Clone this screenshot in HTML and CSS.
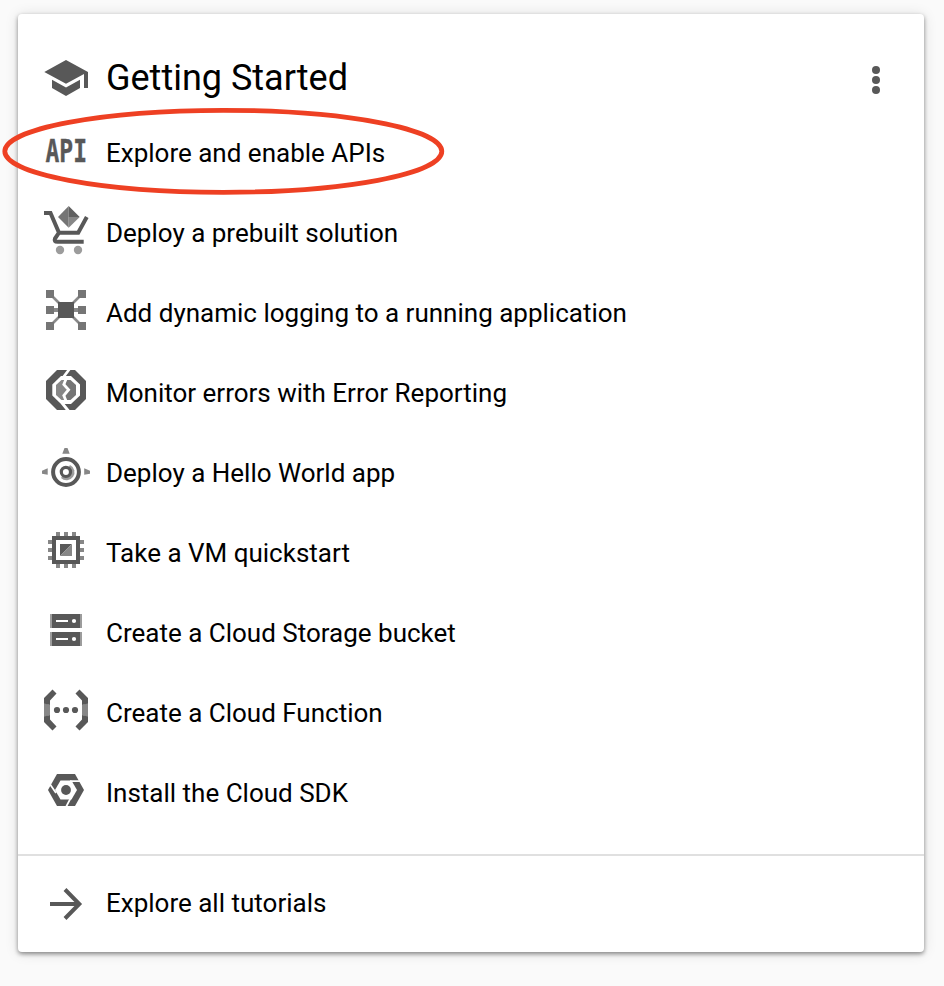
FILE: index.html
```html
<!DOCTYPE html>
<html lang="en">
<head>
<meta charset="utf-8">
<title>Getting Started</title>
<link rel="stylesheet" href="styles.css">
</head>
<body>
<main class="card">
  <header class="head">
    <svg class="icon" viewBox="42 54 48 48"><path d="M66 60 44.3 71.9 66 83.8 84 74V88H88V71.9ZM52 79.7V88L66 96 80 88V79.7L66 87.5Z"/></svg>
    <h1 class="title">Getting Started</h1>
    <svg class="more" viewBox="0 0 8 28"><circle cx="4" cy="4" r="4"/><circle cx="4" cy="14" r="4"/><circle cx="4" cy="24" r="4"/></svg>
  </header>
  <ul class="list">
    <li class="row">
      <svg class="icon" viewBox="42 126 48 48"><text class="api" x="45.5" y="161.7" textLength="41.5" lengthAdjust="spacingAndGlyphs">API</text></svg>
      <span class="label">Explore and enable APIs</span>
      <svg class="ring" viewBox="0 0 444 90"><ellipse cx="222.3" cy="45.3" rx="218.5" ry="41"/></svg>
    </li>
    <li class="row">
      <svg class="icon" viewBox="42 206 48 48"><path class="line" d="M44 213H50.5L59 232.7H78.2L86.8 217M59 232.7 55 238.5Q53.6 241.7 57.5 241.7H83.7"/><path class="mid" d="M68.7 206V217H58Z"/><path class="deep" d="M68.7 206V217H79.7Z"/><path class="mid" d="M68.7 227.7V217H58Z"/><path class="soft" d="M68.7 227.7V217H79.7Z"/><circle class="light" cx="60" cy="250" r="4.2"/><circle class="light" cx="78" cy="250" r="4.2"/></svg>
      <span class="label">Deploy a prebuilt solution</span>
    </li>
    <li class="row">
      <svg class="icon" viewBox="42 286 48 48"><path class="link" d="M50 294 82 326M82 294 50 326"/><path class="link wide" d="M50 310H82"/><path class="mid" d="M46 290h8v8h-8zM78 290h8v8h-8zM46 306h8v8h-8zM78 306h8v8h-8zM46 322h8v8h-8zM78 322h8v8h-8z"/><path d="M58 302h16v16h-16z"/></svg>
      <span class="label">Add dynamic logging to a running application</span>
    </li>
    <li class="row">
      <svg class="icon" viewBox="42 366 48 48"><path d="M57 370H75L86 381V399L75 410H57L46 399V381Z"/><path class="white" d="M61 376H71L80 384.5V395.5L71 404H61L52.3 395.5V384.5Z"/><path class="soft" d="M61.5 380H66V400H61.5L56 395V385Z"/><path class="mid" d="M66 380H70.5L76 385V395L70.5 400H66Z"/><path class="cut" d="M69.5 369 63.5 377M62 403 68.5 411M66.5 378 63.8 384.5 68.6 389.7 63.8 395.5 66.5 402"/></svg>
      <span class="label">Monitor errors with Error Reporting</span>
    </li>
    <li class="row">
      <svg class="icon" viewBox="42 446 48 48"><path class="soft" d="M64.5 448H67.5L69.7 453.7H62.3ZM42 470.8 47.7 468.3V474.7L42 473.7ZM90 470.8 84.2 468.3V474.7L90 473.7Z"/><circle class="line" cx="66" cy="472" r="12.9"/><path class="light" d="M70 465A8 8 0 1 1 61 478Z"/><circle class="core" cx="65.9" cy="471.9" r="4.6"/></svg>
      <span class="label">Deploy a Hello World app</span>
    </li>
    <li class="row">
      <svg class="icon" viewBox="42 526 48 48"><path class="soft" d="M56 532h4v4h-4zM64 532h4v4h-4zM72 532h4v4h-4zM56 564h4v4h-4zM64 564h4v4h-4zM72 564h4v4h-4zM48 540h4v4h-4zM48 548h4v4h-4zM48 556h4v4h-4zM80 540h4v4h-4zM80 548h4v4h-4zM80 556h4v4h-4z"/><path fill-rule="evenodd" d="M52 536H80V564H52ZM56 540V560H76V540Z"/><path d="M60 544H72L60 556Z"/><path class="soft" d="M72 544V556H60Z"/></svg>
      <span class="label">Take a VM quickstart</span>
    </li>
    <li class="row">
      <svg class="icon" viewBox="42 606 48 48"><path class="light" d="M50 614h32v14h-32zM50 632h32v14h-32z"/><path d="M52 614h28v14h-28zM52 632h28v14h-28z"/><path class="white" d="M56 620h12v2h-12zM56 638h12v2h-12z"/><circle class="white" cx="74" cy="621" r="2.1"/><circle class="white" cx="74" cy="639" r="2.1"/></svg>
      <span class="label">Create a Cloud Storage bucket</span>
    </li>
    <li class="row">
      <svg class="icon" viewBox="42 686 48 48"><path class="soft" d="M44 703 50 705V715L44 717ZM88 703 82 705V715L88 717Z"/><path d="M44 698 52.5 689.5 56.5 693.5 50 700.5V705L44 703.5ZM44 722 52.5 730.5 56.5 726.5 50 719.5V715L44 716.5ZM88 698 79.5 689.5 75.5 693.5 82 700.5V705L88 703.5ZM88 722 79.5 730.5 75.5 726.5 82 719.5V715L88 716.5Z"/><circle cx="57" cy="710" r="3.1"/><circle cx="66" cy="710" r="3.1"/><circle cx="75" cy="710" r="3.1"/></svg>
      <span class="label">Create a Cloud Function</span>
    </li>
    <li class="row">
      <svg class="icon" viewBox="42 766 48 48"><path d="M57 774H75L84 790 75 806H57L48 790Z"/><path class="white" d="M60.5 780.5H71.5L77 790 71.5 799.5H60.5L55 790Z"/><circle cx="66" cy="790" r="4.9"/><path class="slit" d="M70 781.2H82M49 782.8 56 793M71 797.5 66 807"/></svg>
      <span class="label">Install the Cloud SDK</span>
    </li>
  </ul>
  <footer class="foot">
    <svg class="icon" viewBox="42 880 48 48"><path class="line" d="M50 904H79M65 889.5 79.3 904 65 918.5"/></svg>
    <span class="label">Explore all tutorials</span>
  </footer>
</main>
</body>
</html>
```
FILE: styles.css
```css
* { box-sizing: border-box; }
body {
  margin: 0;
  padding: 14px 20px 34px 18px;
  background: #fafafa;
  color: #000;
  font-family: Roboto, sans-serif;
}
.card {
  height: 938px;
  display: flex;
  flex-direction: column;
  background: #fff;
  border-radius: 4px;
  box-shadow: 0 2px 4px rgba(0, 0, 0, .42), 0 1px 14px rgba(0, 0, 0, .12);
}
.head {
  height: 99px;
  padding: 28px 44px 0 24px;
  display: flex;
  align-items: center;
}
.title {
  flex: 1;
  margin: 0 0 0 16px;
  font-size: 36px;
  font-weight: 400;
  line-height: 48px;
}
.more { width: 8px; height: 28px; margin-top: 5px; fill: #585858; }
.list { list-style: none; margin: 0; padding: 0; }
.row {
  position: relative;
  height: 80px;
  padding: 13px 24px 0;
  display: flex;
  align-items: flex-start;
}
.icon { width: 48px; height: 48px; flex: none; fill: #585858; overflow: visible; }
.label {
  margin: 3px 0 0 16px;
  font-size: 26px;
  line-height: 48px;
  white-space: nowrap;
}
.foot {
  margin-top: 21px;
  border-top: 2px solid #e0e0e0;
  padding: 24px 24px 0;
  display: flex;
}
.foot .label { margin-top: -1px; }
.ring {
  position: absolute;
  left: -17px;
  top: -7px;
  width: 444px;
  height: 90px;
  fill: none;
  stroke: #ee4023;
  stroke-width: 4.8;
}
.api { font: bold 32px "DejaVu Sans Mono", monospace; stroke: #585858; stroke-width: .4; }
.deep { fill: #606060; }
.mid { fill: #757575; }
.soft { fill: #878787; }
.light { fill: #9c9c9c; }
.white { fill: #fff; }
.line { fill: none; stroke: #585858; stroke-width: 4; }
.link { stroke: #8a8a8a; stroke-width: 2.6; }
.wide { stroke-width: 4; }
.cut { fill: none; stroke: #fff; stroke-width: 2.8; }
.slit { fill: none; stroke: #fff; stroke-width: 1.7; }
.core { fill: #fff; stroke: #585858; stroke-width: 3.2; }
```
